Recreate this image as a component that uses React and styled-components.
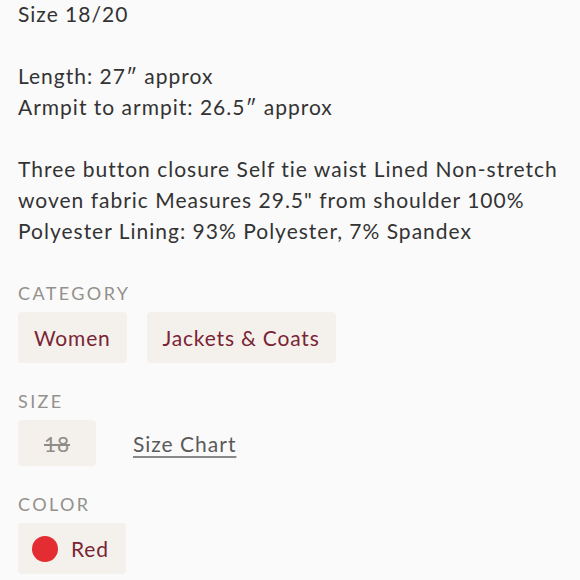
import React from "react";
import styled, { createGlobalStyle } from "styled-components";

const Global = createGlobalStyle`
  html, body { margin: 0; padding: 0; background: #fafafa; }
  body { font-family: Lato, "Noto Sans", sans-serif; }
`;

const Page = styled.div`
  padding: 0 8px 0 18px;
  margin-top: -2px;
`;

const Description = styled.p`
  margin: 0;
  white-space: pre-line;
  font-size: 21px;
  line-height: 31px;
  letter-spacing: 1px;
  color: #333;
`;

const Section = styled.section`
  margin-top: ${(p) => p.$top}px;
`;

const Label = styled.div`
  font-size: 18px;
  line-height: 22px;
  letter-spacing: 2.4px;
  color: #94908b;
  text-transform: uppercase;
  margin-bottom: 8px;
`;

const Row = styled.div`
  display: flex;
  align-items: center;
  gap: ${(p) => p.$gap || 20}px;
`;

const Chip = styled.div`
  display: flex;
  align-items: center;
  gap: 13px;
  height: ${(p) => p.$h || 51}px;
  padding: 0 ${(p) => p.$pr || p.$px || 16}px 0 ${(p) => p.$px || 16}px;
  background: #f4f1ed;
  border-radius: 4px;
  font-size: 21px;
  letter-spacing: 0.8px;
  color: ${(p) => (p.$muted ? "#8f8b87" : "#7a2434")};
  text-decoration: ${(p) => (p.$muted ? "line-through" : "none")};
`;

const Dot = styled.span`
  width: 26px;
  height: 26px;
  border-radius: 50%;
  background: ${(p) => p.$color};
`;

const Link = styled.a`
  font-size: 21px;
  letter-spacing: 1px;
  color: #5a5a5a;
  text-decoration: underline;
  text-decoration-color: #888;
  text-underline-offset: 4px;
`;

const text = `Size 18/20

Length: 27″ approx
Armpit to armpit: 26.5″ approx

Three button closure Self tie waist Lined Non-stretch woven fabric Measures 29.5" from shoulder 100% Polyester Lining: 93% Polyester, 7% Spandex`;

export default function App() {
  return (
    <>
      <Global />
      <Page>
        <Description>{text}</Description>
        <Section $top={36}>
          <Label>Category</Label>
          <Row>
            <Chip>Women</Chip>
            <Chip>Jackets &amp; Coats</Chip>
          </Row>
        </Section>
        <Section $top={27}>
          <Label>Size</Label>
          <Row $gap={37}>
            <Chip $muted $h={46} $px={26}>18</Chip>
            <Link href="#">Size Chart</Link>
          </Row>
        </Section>
        <Section $top={27}>
          <Label>Color</Label>
          <Row>
            <Chip $px={14} $pr={17}>
              <Dot $color="#e42d32" />
              Red
            </Chip>
          </Row>
        </Section>
      </Page>
    </>
  );
}
